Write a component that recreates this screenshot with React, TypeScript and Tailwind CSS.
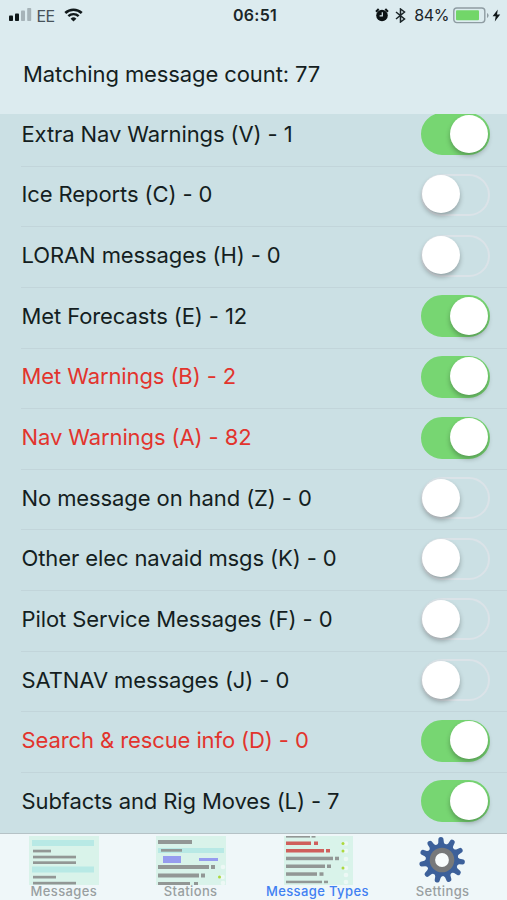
import clsx from "clsx";
import React, { useState } from "react";

interface MessageType {
  label: string;
  count: number;
  on: boolean;
  urgent?: boolean;
}

const messageTypes: MessageType[] = [
  { label: "Extra Nav Warnings (V)", count: 1, on: true },
  { label: "Ice Reports (C)", count: 0, on: false },
  { label: "LORAN messages (H)", count: 0, on: false },
  { label: "Met Forecasts (E)", count: 12, on: true },
  { label: "Met Warnings (B)", count: 2, on: true, urgent: true },
  { label: "Nav Warnings (A)", count: 82, on: true, urgent: true },
  { label: "No message on hand (Z)", count: 0, on: false },
  { label: "Other elec navaid msgs (K)", count: 0, on: false },
  { label: "Pilot Service Messages (F)", count: 0, on: false },
  { label: "SATNAV messages (J)", count: 0, on: false },
  { label: "Search & rescue info (D)", count: 0, on: true, urgent: true },
  { label: "Subfacts and Rig Moves (L)", count: 7, on: true },
];

const StatusBar = () => (
  <div className="grid h-[30px] grid-cols-3 items-center pl-[9px] pr-[6px] text-[#1b2528]">
    <div className="flex items-center">
      <svg width="23" height="14" viewBox="0 0 23 14">
        <rect x="0" y="7.5" width="4" height="5.5" rx="0.8" fill="#10181a" />
        <rect x="6" y="5.5" width="4" height="7.5" rx="0.8" fill="#10181a" />
        <rect x="12" y="2.5" width="4" height="10.5" rx="0.8" fill="#a6b3b8" />
        <rect x="18.2" y="0" width="4" height="13" rx="0.8" fill="#a6b3b8" />
      </svg>
      <span className="ml-[4.5px] pt-px text-[16px] tracking-[-0.5px] text-[#47535a]">EE</span>
      <svg className="ml-[9px]" width="19" height="14" viewBox="0 0 20 15" fill="none" stroke="#10181a">
        <path d="M1.2 5.4a12.6 12.6 0 0 1 17.6 0" strokeWidth="2.8" />
        <path d="M4.5 8.8a7.9 7.9 0 0 1 11 0" strokeWidth="2.6" />
        <path d="M10 14.5 6.9 11.4a4.5 4.5 0 0 1 6.2 0z" fill="#10181a" stroke="none" />
      </svg>
    </div>
    <div className="text-center text-[16px] font-semibold tracking-[0.3px]">06:51</div>
    <div className="flex items-center justify-end">
      <svg width="14" height="14" viewBox="0 0 14 14">
        <circle cx="7" cy="7.5" r="5.8" fill="#0c1214" />
        <path d="M1 3.7 3.7 1M13 3.7 10.3 1" stroke="#0c1214" strokeWidth="2" />
        <path d="M7.3 4.3v3.5H4.6" fill="none" stroke="#dcebef" strokeWidth="1.2" />
      </svg>
      <svg className="ml-1.5" width="11" height="15" viewBox="0 0 11 15" fill="none" stroke="#1b2528" strokeWidth="1.5">
        <path d="m1 4 8.5 7L5.5 14V1l4 3L1 11" />
      </svg>
      <span className="ml-[8px] text-[16px] tracking-[-0.4px]">84%</span>
      <svg className="ml-1" width="36" height="17" viewBox="0 0 36 17">
        <rect x="0.8" y="1" width="31" height="14.6" rx="3" fill="none" stroke="#8e9ca2" strokeWidth="1.4" />
        <rect x="3" y="3.3" width="23" height="10" rx="1" fill="#72d669" />
        <path d="M34 6v5q1.6-.8 1.6-2.5T34 6" fill="#8e9ca2" />
      </svg>
      <svg className="ml-[3px]" width="9" height="13" viewBox="0 0 9 13">
        <path d="M5.8.5.6 7.2h3.1L2.8 12.5 8.2 5.5H5z" fill="#10181a" />
      </svg>
    </div>
  </div>
);

const Toggle: React.FC<{ on: boolean; onClick: () => void }> = ({ on, onClick }) => (
  <button
    onClick={onClick}
    className={clsx(
      "flex h-[42px] w-[69px] shrink-0 items-center rounded-full border-2",
      on ? "justify-end border-[#77d672] bg-[#77d672]" : "justify-start border-[#dbe3e8]"
    )}
  >
    <span
      className={clsx(
        "mb-[1px] size-[38px] rounded-full bg-white shadow-[0_3px_5px_rgba(0,0,0,0.28)]",
        !on && "-ml-[0.5px]"
      )}
    />
  </button>
);

interface BarShape {
  x: number;
  y: number;
  w: number;
  h?: number;
  fill?: string;
}

const Thumbnail: React.FC<{ bars: BarShape[]; dots?: number[][]; x?: number }> = ({ bars, dots = [], x = 0 }) => (
  <svg className="ml-[1.5px]" width="70" height="50" viewBox="0 0 70 50">
    <rect x={x} width={70 - x} height="49" fill="#d9f3ea" />
    {bars.map((b, i) => (
      <rect key={i} x={b.x} y={b.y} width={b.w} height={b.h ?? 2.7} fill={b.fill ?? "#929795"} />
    ))}
    {dots.map(([cx, cy, lit], i) => (
      <g key={i}>
        <circle cx={cx + 3} cy={cy} r="2.3" fill="#edf8f5" />
        {lit ? <circle cx={cx} cy={cy} r="1.5" fill="#acd93d" /> : null}
      </g>
    ))}
  </svg>
);

const MessagesIcon = () => (
  <Thumbnail
    bars={[
      { x: 3, y: 4, w: 62, h: 6, fill: "#b8e9e5" },
      { x: 4, y: 13.7, w: 18 },
      { x: 4, y: 19.7, w: 43 },
      { x: 4, y: 25.3, w: 43 },
      { x: 3, y: 30.5, w: 62, h: 6, fill: "#b8e9e5" },
      { x: 4, y: 39.8, w: 23 },
      { x: 4, y: 45.8, w: 43 },
    ]}
  />
);

const StationsIcon = () => (
  <Thumbnail
    bars={[
      { x: 2, y: 4, w: 34, h: 4 },
      { x: 2, y: 12, w: 66, h: 5, fill: "#b8e9e5" },
      { x: 5, y: 13, w: 21 },
      { x: 7, y: 20, w: 18, h: 7, fill: "#969cef" },
      { x: 43, y: 22, w: 19, h: 3, fill: "#969cef" },
      { x: 2, y: 29, w: 51, h: 4 },
      { x: 55, y: 29, w: 4, h: 4 },
      { x: 2, y: 37.5, w: 41, h: 4 },
      { x: 45, y: 37.5, w: 4, h: 4 },
      { x: 2, y: 46, w: 32, h: 3 },
      { x: 38, y: 46, w: 4, h: 3 },
    ]}
    dots={[[64, 31, 0], [63.5, 41, 1], [64, 47, 0]]}
  />
);

const TypesIcon = () => (
  <Thumbnail
    x={1}
    bars={[
      { x: 3, y: 0, w: 24, h: 1.6 },
      { x: 28.5, y: 0, w: 4, h: 1.6 },
      { x: 3, y: 5.5, w: 25, h: 3.5, fill: "#cf5f5c" },
      { x: 31, y: 5.5, w: 4, h: 3.5, fill: "#cf5f5c" },
      { x: 3, y: 13, w: 38, h: 3.5, fill: "#cf5f5c" },
      { x: 43, y: 13, w: 4, h: 3.5, fill: "#cf5f5c" },
      { x: 3, y: 20.7, w: 47, h: 3.5 },
      { x: 52, y: 20.7, w: 4, h: 3.5 },
      { x: 3, y: 28.5, w: 39, h: 3.5 },
      { x: 44, y: 28.5, w: 4, h: 3.5 },
      { x: 3, y: 36.3, w: 31, h: 3.5 },
      { x: 36.5, y: 36.3, w: 4, h: 3.5 },
      { x: 3, y: 44.7, w: 36, h: 2.5 },
      { x: 41, y: 44.7, w: 4, h: 2.5 },
    ]}
    dots={[[60, 7.5, 1], [60, 15, 1], [60, 23, 0], [60, 32, 1], [60, 39, 0], [60, 46, 0]]}
  />
);

const GearIcon = () => (
  <svg className="-ml-[4px]" width="48" height="50" viewBox="-24 -24 48 50">
    {Array.from({ length: 11 }, (_, i) => (
      <path
        key={i}
        d="M-5-13 L-2.8-17.5 L-2.5-21.3 Q-2.2-23 0-23 Q2.2-23 2.5-21.3 L2.8-17.5 L5-13z"
        fill="#3c609a"
        transform={`rotate(${(i * 360) / 11 - 3})`}
      />
    ))}
    <circle r="16.3" fill="#3c609a" />
    <circle r="12.3" fill="#77797a" />
    <circle r="6.9" fill="#f7fcfc" />
  </svg>
);

const tabs = [
  { label: "Messages", icon: <MessagesIcon /> },
  { label: "Stations", icon: <StationsIcon /> },
  { label: "Message Types", icon: <TypesIcon /> },
  { label: "Settings", icon: <GearIcon /> },
];

const TabBar = () => {
  const [active, setActive] = useState("Message Types");

  return (
    <div className="grid h-[67px] shrink-0 grid-cols-4 border-t-[1.5px] border-[#b5c2c6] bg-[#eff7f9]">
      {tabs.map((tab) => (
        <button
          key={tab.label}
          onClick={() => setActive(tab.label)}
          className={clsx(
            "flex flex-col items-center whitespace-nowrap pt-[1.5px] text-[13px] font-medium leading-none tracking-[0.38px]",
            active === tab.label ? "text-[#3f80f2]" : "text-[#999fa1]"
          )}
        >
          {tab.icon}
          <span className={clsx("-mt-[1px]", tab.label === "Settings" ? "-ml-[2px]" : "ml-[1px]")}>{tab.label}</span>
        </button>
      ))}
    </div>
  );
};

export default function App() {
  const [types, setTypes] = useState(messageTypes);

  const toggle = (idx: number) =>
    setTypes(types.map((t, i) => (i === idx ? { ...t, on: !t.on } : t)));

  return (
    <div className="flex h-[900px] w-[507px] flex-col overflow-hidden bg-[#cbe0e4] font-['Inter',sans-serif]">
      <div className="h-[114px] shrink-0 bg-[#dcebef]">
        <StatusBar />
        <div className="pl-[23px] pt-[27px] text-[22px] leading-[34px] tracking-[-0.1px] text-[#141e21]">
          Matching message count: 77
        </div>
      </div>
      <div className="min-h-0 flex-1 overflow-hidden">
        <div className="-mt-[8px]">
          {types.map((t, idx) => (
            <div key={t.label} className="h-[60.65px] pl-[21px]">
              <div
                className={clsx(
                  "flex h-full items-center justify-between border-b border-[#c2d5da] pb-[3px] pr-[17.5px] text-[22px] tracking-[-0.1px]",
                  t.urgent ? "text-[#e2342d]" : "text-[#141e21]"
                )}
              >
                <span className="pl-[0.5px]">
                  {t.label} - {t.count}
                </span>
                <Toggle on={t.on} onClick={() => toggle(idx)} />
              </div>
            </div>
          ))}
        </div>
      </div>
      <TabBar />
    </div>
  );
}
